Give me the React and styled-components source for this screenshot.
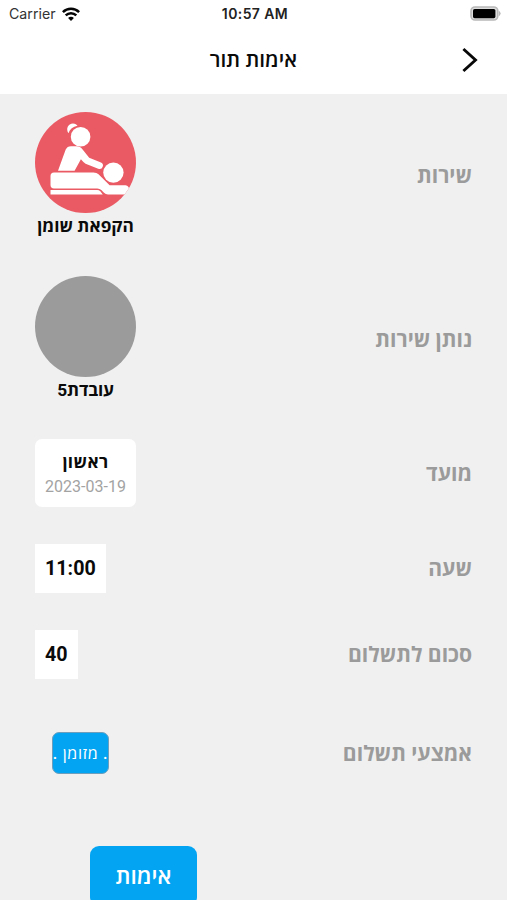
import React from "react";
import styled, { createGlobalStyle } from "styled-components";

const GlobalStyle = createGlobalStyle`
  * { box-sizing: border-box; }
  html, body { margin: 0; padding: 0; overflow: hidden; background: #f0f0f0; }
`;

const Screen = styled.main`
  display: flex;
  flex-direction: column;
  height: 900px;
  overflow: hidden;
  background: #f0f0f0;
  color: #0a0a0a;
  font-family: Roboto, "Open Sans", sans-serif;
`;

const Header = styled.header`
  flex: none;
  height: 94px;
  background: #fff;
`;

const StatusBar = styled.div`
  display: grid;
  grid-template-columns: 1fr auto 1fr;
  align-items: center;
  height: 27px;
  padding: 0 6px 0 9px;
  font-family: Inter, sans-serif;
  line-height: 27px;
`;

const Carrier = styled.div`
  display: flex;
  align-items: center;
  gap: 6px;
  color: #333;
  font-size: 14.2px;
`;

const Clock = styled.div`
  font-weight: 600;
  font-size: 14px;
  letter-spacing: 0.4px;
  color: #222;
`;

const BatteryIcon = styled.svg`
  justify-self: end;
`;

const NavBar = styled.div`
  display: grid;
  grid-template-columns: 1fr auto 1fr;
  align-items: center;
  height: 65px;
  padding: 0 28px;
`;

const Title = styled.h1`
  grid-column: 2;
  margin: 0;
  direction: rtl;
  font-size: 20.8px;
  line-height: 28px;
  font-weight: 600;
`;

const BackButton = styled.button`
  justify-self: end;
  display: flex;
  padding: 0;
  border: 0;
  background: none;
`;

const Details = styled.section`
  display: flex;
  flex-direction: column;
  gap: 37px;
  padding: 18px 35px 0;
`;

const Row = styled.div`
  display: flex;
  flex: none;
  justify-content: space-between;
  align-items: center;
  height: ${(p) => p.$height}px;
  margin-top: ${(p) => p.$offset || 0}px;
  padding-left: ${(p) => p.$indent || 0}px;
`;

const Label = styled.div`
  direction: rtl;
  padding-top: 1px;
  color: #9b9b9b;
  font-size: 21.1px;
  line-height: 30px;
  font-weight: 700;
  white-space: nowrap;
`;

const Profile = styled.div`
  display: flex;
  flex-direction: column;
  align-items: center;
  width: 101px;
`;

const Avatar = styled.div`
  width: 101px;
  height: 101px;
  border-radius: 50%;
  overflow: hidden;
  background: ${(p) => p.$color};
`;

const Caption = styled.div`
  direction: rtl;
  padding-top: 1px;
  font-size: 17.3px;
  line-height: 24px;
  font-weight: 700;
  white-space: nowrap;
  letter-spacing: ${(p) => p.$tracking || 0}px;
`;

const DateCard = styled.div`
  display: flex;
  flex-direction: column;
  align-items: center;
  width: 101px;
  height: 68px;
  padding-top: 10px;
  border-radius: 7px;
  background: #fff;
`;

const DateText = styled.div`
  color: #a3a3a3;
  font-size: 16px;
  line-height: 25px;
`;

const ValueBox = styled.div`
  display: flex;
  align-items: center;
  height: 49px;
  padding: 0 10px 1px;
  background: #fff;
  font-size: 19.7px;
  font-weight: 700;
`;

const PaymentChip = styled.button`
  display: flex;
  align-items: center;
  justify-content: center;
  width: 57px;
  height: 42px;
  padding: 0 0 1px;
  border: 1px solid #6d9fbd;
  border-radius: 7px;
  background: #03a5f3;
  color: #fff;
  direction: rtl;
  font-family: inherit;
  font-size: 16px;
  font-weight: 500;
  letter-spacing: 0.7px;
  white-space: nowrap;
`;

const ConfirmButton = styled.button`
  flex: none;
  width: 107px;
  height: 60px;
  margin: 72px 0 0 90px;
  padding: 0 0 1px;
  border: 0;
  border-radius: 9px;
  background: #03a5f3;
  color: #fff;
  direction: rtl;
  font-family: inherit;
  font-size: 22.6px;
  font-weight: 600;
`;

const Wifi = () => (
  <svg width="18" height="14" viewBox="0 0 18 14" fill="none" stroke="#050505" strokeWidth="2.5">
    <path d="M.9 5.1a11.5 11.5 0 0 1 16.2 0" />
    <path d="M3.7 8.4a7.5 7.5 0 0 1 10.6 0" />
    <path d="M9 14 6.1 11.1a4 4 0 0 1 5.8 0Z" fill="#050505" stroke="none" />
  </svg>
);

const Battery = () => (
  <BatteryIcon width="31" height="15" viewBox="0 0 31 15">
    <rect x="1" y="1" width="26.8" height="13" rx="4" fill="#ddd" stroke="#b8b8b8" strokeWidth="1.6" />
    <rect x="3" y="3" width="22.4" height="9.2" rx="1.6" fill="#000" />
    <path d="M29.4 5.4q1.8 2.1 0 4.2Z" fill="#aaa" stroke="#aaa" strokeWidth=".5" />
  </BatteryIcon>
);

const Massage = () => (
  <svg width="101" height="101" viewBox="0 0 101 101" fill="#fff">
    <path d="M33.4 21.2C30.6 16.9 33 11.5 38 11.5c2.2 0 3.7 1 4.5 2.3-4.6.8-7.7 3.4-9.1 7.4Z" />
    <circle cx="45.6" cy="24.7" r="9.8" />
    <path d="M23 58.8 30.7 37.6Q32.2 34.2 36 34.2H41.5Q45.2 34.2 47.6 37.4L54.2 45.8 66 50.4Q68.8 51.8 67.7 54.8 66.6 57.8 63.2 56.7L50.6 51.8Q48.6 50.6 45.9 47.3L39.6 58.8Z" />
    <circle cx="78.4" cy="60.6" r="10.2" />
    <path d="M19 60.4H58.5Q61.7 60.4 63.5 62.2L74.6 73.2H90.5Q94.2 73.8 94.2 77.6 93.7 82.4 89.8 82.4H73Q70.7 82.4 69 80.8L66.3 77.9Q64.8 76.4 62.3 76.4H19Q15.5 76.4 15.5 73V64Q15.5 60.4 19 60.4Z" />
    <path d="M15.5 78H62.2Q64.2 78 65.2 79.2L67.8 82.4H15.5Z" />
  </svg>
);

const Chevron = () => (
  <svg width="18" height="26" viewBox="0 0 18 26" fill="none" stroke="#080808" strokeWidth="2.9">
    <path d="M2.4 2 14.5 13 2.4 24" />
  </svg>
);

export default function App() {
  return (
    <Screen>
      <GlobalStyle />
      <Header>
        <StatusBar>
          <Carrier>
            <span>Carrier</span>
            <Wifi />
          </Carrier>
          <Clock>10:57 AM</Clock>
          <Battery />
        </StatusBar>
        <NavBar>
          <Title>אימות תור</Title>
          <BackButton aria-label="חזרה">
            <Chevron />
          </BackButton>
        </NavBar>
      </Header>
      <Details>
        <Row $height={126}>
          <Profile>
            <Avatar $color="#ea5a64">
              <Massage />
            </Avatar>
            <Caption>הקפאת שומן</Caption>
          </Profile>
          <Label>שירות</Label>
        </Row>
        <Row $height={126} $offset={1}>
          <Profile>
            <Avatar $color="#9b9b9b" />
            <Caption $tracking={-0.2}>עובדת5</Caption>
          </Profile>
          <Label>נותן שירות</Label>
        </Row>
        <Row $height={68}>
          <DateCard>
            <Caption $tracking={0.4}>ראשון</Caption>
            <DateText>2023-03-19</DateText>
          </DateCard>
          <Label>מועד</Label>
        </Row>
        <Row $height={49}>
          <ValueBox>11:00</ValueBox>
          <Label>שעה</Label>
        </Row>
        <Row $height={49}>
          <ValueBox>40</ValueBox>
          <Label>סכום לתשלום</Label>
        </Row>
        <Row $height={42} $offset={16} $indent={17}>
          <PaymentChip>. מזומן .</PaymentChip>
          <Label>אמצעי תשלום</Label>
        </Row>
      </Details>
      <ConfirmButton>אימות</ConfirmButton>
    </Screen>
  );
}
